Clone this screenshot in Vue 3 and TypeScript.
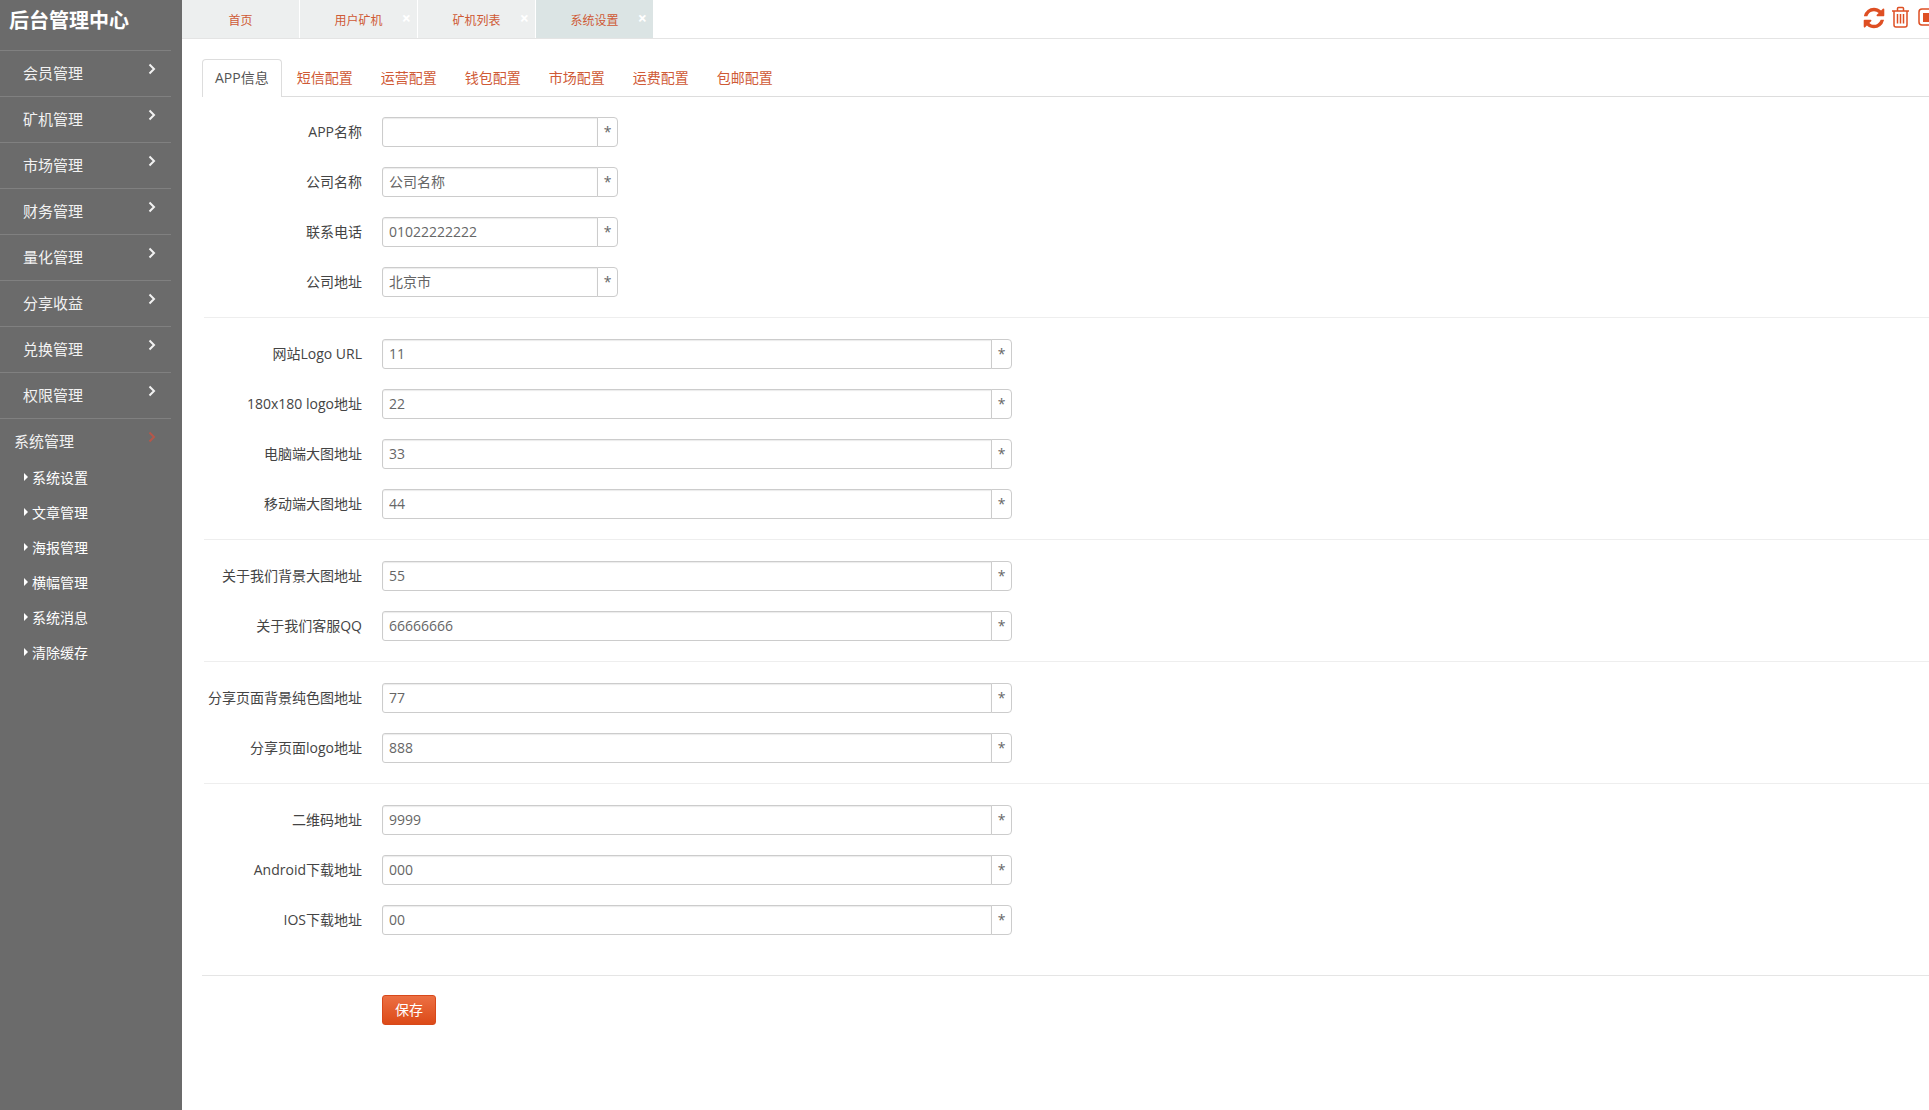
<script setup lang="ts">
interface Field { label: string; value: string }

const menus: string[] = ['会员管理', '矿机管理', '市场管理', '财务管理', '量化管理', '分享收益', '兑换管理', '权限管理']
const subMenus: string[] = ['系统设置', '文章管理', '海报管理', '横幅管理', '系统消息', '清除缓存']
const pageTabs: { name: string; closable: boolean; active: boolean }[] = [
  { name: '首页', closable: false, active: false },
  { name: '用户矿机', closable: true, active: false },
  { name: '矿机列表', closable: true, active: false },
  { name: '系统设置', closable: true, active: true }
]
const navTabs: string[] = ['APP信息', '短信配置', '运营配置', '钱包配置', '市场配置', '运费配置', '包邮配置']

const shortFields: Field[] = [
  { label: 'APP名称', value: '' },
  { label: '公司名称', value: '公司名称' },
  { label: '联系电话', value: '01022222222' },
  { label: '公司地址', value: '北京市' }
]
const wideGroups: Field[][] = [
  [
    { label: '网站Logo URL', value: '11' },
    { label: '180x180 logo地址', value: '22' },
    { label: '电脑端大图地址', value: '33' },
    { label: '移动端大图地址', value: '44' }
  ],
  [
    { label: '关于我们背景大图地址', value: '55' },
    { label: '关于我们客服QQ', value: '66666666' }
  ],
  [
    { label: '分享页面背景纯色图地址', value: '77' },
    { label: '分享页面logo地址', value: '888' }
  ],
  [
    { label: '二维码地址', value: '9999' },
    { label: 'Android下载地址', value: '000' },
    { label: 'IOS下载地址', value: '00' }
  ]
]
</script>

<template>
  <div class="page">
    <aside class="sidebar">
      <div class="brand">后台管理中心</div>
      <div v-for="m in menus" :key="m" class="menu-item">
        <span>{{ m }}</span>
        <svg class="chev" viewBox="0 0 8 12" width="8" height="12"><path d="M1.5 1.500 6 6l-4.500 4.500" fill="none" stroke="currentColor" stroke-width="2" /></svg>
      </div>
      <div class="menu-open">
        <span>系统管理</span>
        <svg class="chev red" viewBox="0 0 8 12" width="8" height="12"><path d="M1.500 1.500 6 6l-4.500 4.500" fill="none" stroke="currentColor" stroke-width="2" /></svg>
      </div>
      <div v-for="s in subMenus" :key="s" class="sub-item">
        <i class="tri"></i><span>{{ s }}</span>
      </div>
    </aside>

    <main class="main">
      <header class="topbar">
        <div v-for="t in pageTabs" :key="t.name" class="page-tab" :class="{ active: t.active }">
          <span>{{ t.name }}</span>
          <b v-if="t.closable" class="close">×</b>
        </div>
        <div class="tools">
          <svg class="tool" viewBox="0 0 1792 1792" width="24" height="24"><path fill="#de4f23" d="M1639 1056q0 5-1 7-64 268-268 434.500t-478 166.500q-146 0-282.500-55t-243.500-157l-129 129q-19 19-45 19t-45-19-19-45v-448q0-26 19-45t45-19h448q26 0 45 19t19 45-19 45l-137 137q71 66 161 102t187 36q134 0 250-65t186-179q11-17 53-117 8-23 30-23h192q13 0 22.500 9.500t9.500 22.500zm25-800v448q0 26-19 45t-45 19h-448q-26 0-45-19t-19-45 19-45l138-138q-148-137-349-137-134 0-250 65t-186 179q-11 17-53 117-8 23-30 23h-199q-13 0-22.500-9.500t-9.500-22.500v-7q65-268 270-434.500t480-166.500q146 0 284 55.500t245 156.500l130-129q19-19 45-19t45 19 19 45z" /></svg>
          <svg class="tool" viewBox="0 0 19 22" width="19" height="22" fill="none" stroke="#de4f23" stroke-width="1.500"><path d="M1 5h17M3 5v14q0 2 2 2h9q2 0 2-2V5M6.500 5V2.500q0-1 1-1h4q1 0 1 1V5M6.500 8v9.500M9.500 8v9.500M12.500 8v9.500" /></svg>
          <svg class="tool last" viewBox="0 0 20 20" width="20" height="20"><rect x="1" y="2" width="18" height="16" rx="3" fill="none" stroke="#de4f23" stroke-width="1.500" /><rect x="5" y="6" width="10" height="9" fill="#de4f23" /></svg>
        </div>
      </header>

      <section class="content">
        <nav class="nav-tabs">
          <a v-for="(n, i) in navTabs" :key="n" class="nav-tab" :class="{ active: i === 0 }">{{ n }}</a>
        </nav>

        <form class="form" @submit.prevent>
          <div class="group">
            <label v-for="f in shortFields" :key="f.label" class="row">
              <span class="lbl">{{ f.label }}</span>
              <span class="field short">
                <input class="input" type="text" :value="f.value" />
                <span class="addon">*</span>
              </span>
            </label>
          </div>
          <div v-for="(g, gi) in wideGroups" :key="gi" class="group">
            <div class="sep"></div>
            <label v-for="f in g" :key="f.label" class="row">
              <span class="lbl">{{ f.label }}</span>
              <span class="field wide">
                <input class="input" type="text" :value="f.value" />
                <span class="addon">*</span>
              </span>
            </label>
          </div>
          <div class="actions">
            <button class="save" type="button">保存</button>
          </div>
        </form>
      </section>
    </main>
  </div>
</template>

<style>
html, body { margin: 0; padding: 0; overflow: hidden; background: #fff; }
</style>

<style scoped>
.page {
  display: flex;
  width: 1929px;
  height: 1110px;
  overflow: hidden;
  font-family: "Open Sans", "Noto Sans CJK SC", sans-serif;
  font-size: 14px;
  color: #444;
}
.sidebar {
  width: 182px;
  flex: none;
  background: #6b6b6b;
  color: #f2f2f2;
}
.brand {
  height: 50px;
  box-sizing: border-box;
  padding: 7px 0 0 9px;
  font-size: 20px;
  font-weight: 700;
  line-height: 27px;
  color: #fff;
}
.menu-item, .menu-open {
  position: relative;
  box-sizing: border-box;
  margin-right: 11px;
  border-top: 1px solid #808080;
  font-size: 15px;
  line-height: 44px;
}
.menu-item {
  height: 46px;
  padding-left: 23px;
}
.menu-open {
  height: 41px;
  padding-left: 14px;
}
.chev {
  position: absolute;
  left: 148px;
  top: 12px;
  color: #f2f2f2;
}
.chev.red { color: #b5574a; }
.sub-item {
  display: flex;
  align-items: center;
  height: 35px;
  padding-left: 24px;
  font-size: 14px;
  color: #fff;
}
.tri {
  width: 0;
  height: 0;
  border-left: 4px solid #fff;
  border-top: 4px solid transparent;
  border-bottom: 4px solid transparent;
  margin-right: 4px;
}
.main {
  flex: 1;
  min-width: 0;
}
.topbar {
  display: flex;
  height: 38px;
  border-bottom: 1px solid #e4e4e4;
}
.page-tab {
  position: relative;
  width: 117px;
  margin-right: 1px;
  background: #edefef;
  color: #cf5a36;
  font-size: 12px;
  line-height: 41px;
  text-align: center;
}
.page-tab.active { background: #dbe4e4; }
.close {
  position: absolute;
  right: 6px;
  top: -2px;
  color: #fff;
  font-size: 16px;
  font-weight: 700;
}
.tools {
  margin-left: auto;
  display: flex;
  align-items: flex-start;
  gap: 5px;
  margin-right: -9px;
  padding-top: 6px;
}
.tool { flex: none; }
.tool.last { margin: 1px 0 0 3px; }
.content {
  padding: 20px 0 0 20px;
}
.nav-tabs {
  display: flex;
  height: 37px;
  border-bottom: 1px solid #ddd;
}
.nav-tab {
  height: 38px;
  box-sizing: border-box;
  margin-right: 2px;
  padding: 0 12px;
  border: 1px solid transparent;
  border-bottom: 0;
  line-height: 36px;
  color: #cf5a36;
}
.nav-tab.active {
  color: #555;
  background: #fff;
  border-color: #ddd;
  border-radius: 4px 4px 0 0;
}
.form { padding-top: 20px; }
.row {
  display: flex;
  align-items: center;
  height: 30px;
  margin-bottom: 20px;
}
.lbl {
  width: 160px;
  flex: none;
  margin-right: 20px;
  padding-bottom: 2px;
  text-align: right;
  color: #444;
  white-space: nowrap;
}
.field {
  display: flex;
  height: 30px;
  box-sizing: border-box;
}
.field.short { width: 236px; }
.field.wide { width: 630px; }
.input {
  flex: 1;
  min-width: 0;
  height: 30px;
  box-sizing: border-box;
  padding: 0 6px 2px;
  border: 1px solid #ccc;
  border-radius: 3px 0 0 3px;
  box-shadow: inset 0 1px 1px rgba(0, 0, 0, 0.08);
  outline: none;
  font: inherit;
  color: #666;
}
.addon {
  width: 21px;
  flex: none;
  box-sizing: border-box;
  margin-left: -1px;
  border: 1px solid #ccc;
  border-radius: 0 4px 4px 0;
  text-align: center;
  line-height: 28px;
  color: #666;
  background: #fff;
}
.sep {
  height: 1px;
  margin: 0 0 21px 2px;
  background: #eee;
}
.actions {
  margin-top: 40px;
  padding: 19px 0 0 180px;
  border-top: 1px solid #e5e5e5;
}
.save {
  display: block;
  width: 54px;
  height: 30px;
  padding: 0 0 2px;
  border: 1px solid #d8481a;
  border-radius: 3px;
  background: linear-gradient(#ec7043, #dc4a18);
  color: #fff;
  font: inherit;
}
</style>
